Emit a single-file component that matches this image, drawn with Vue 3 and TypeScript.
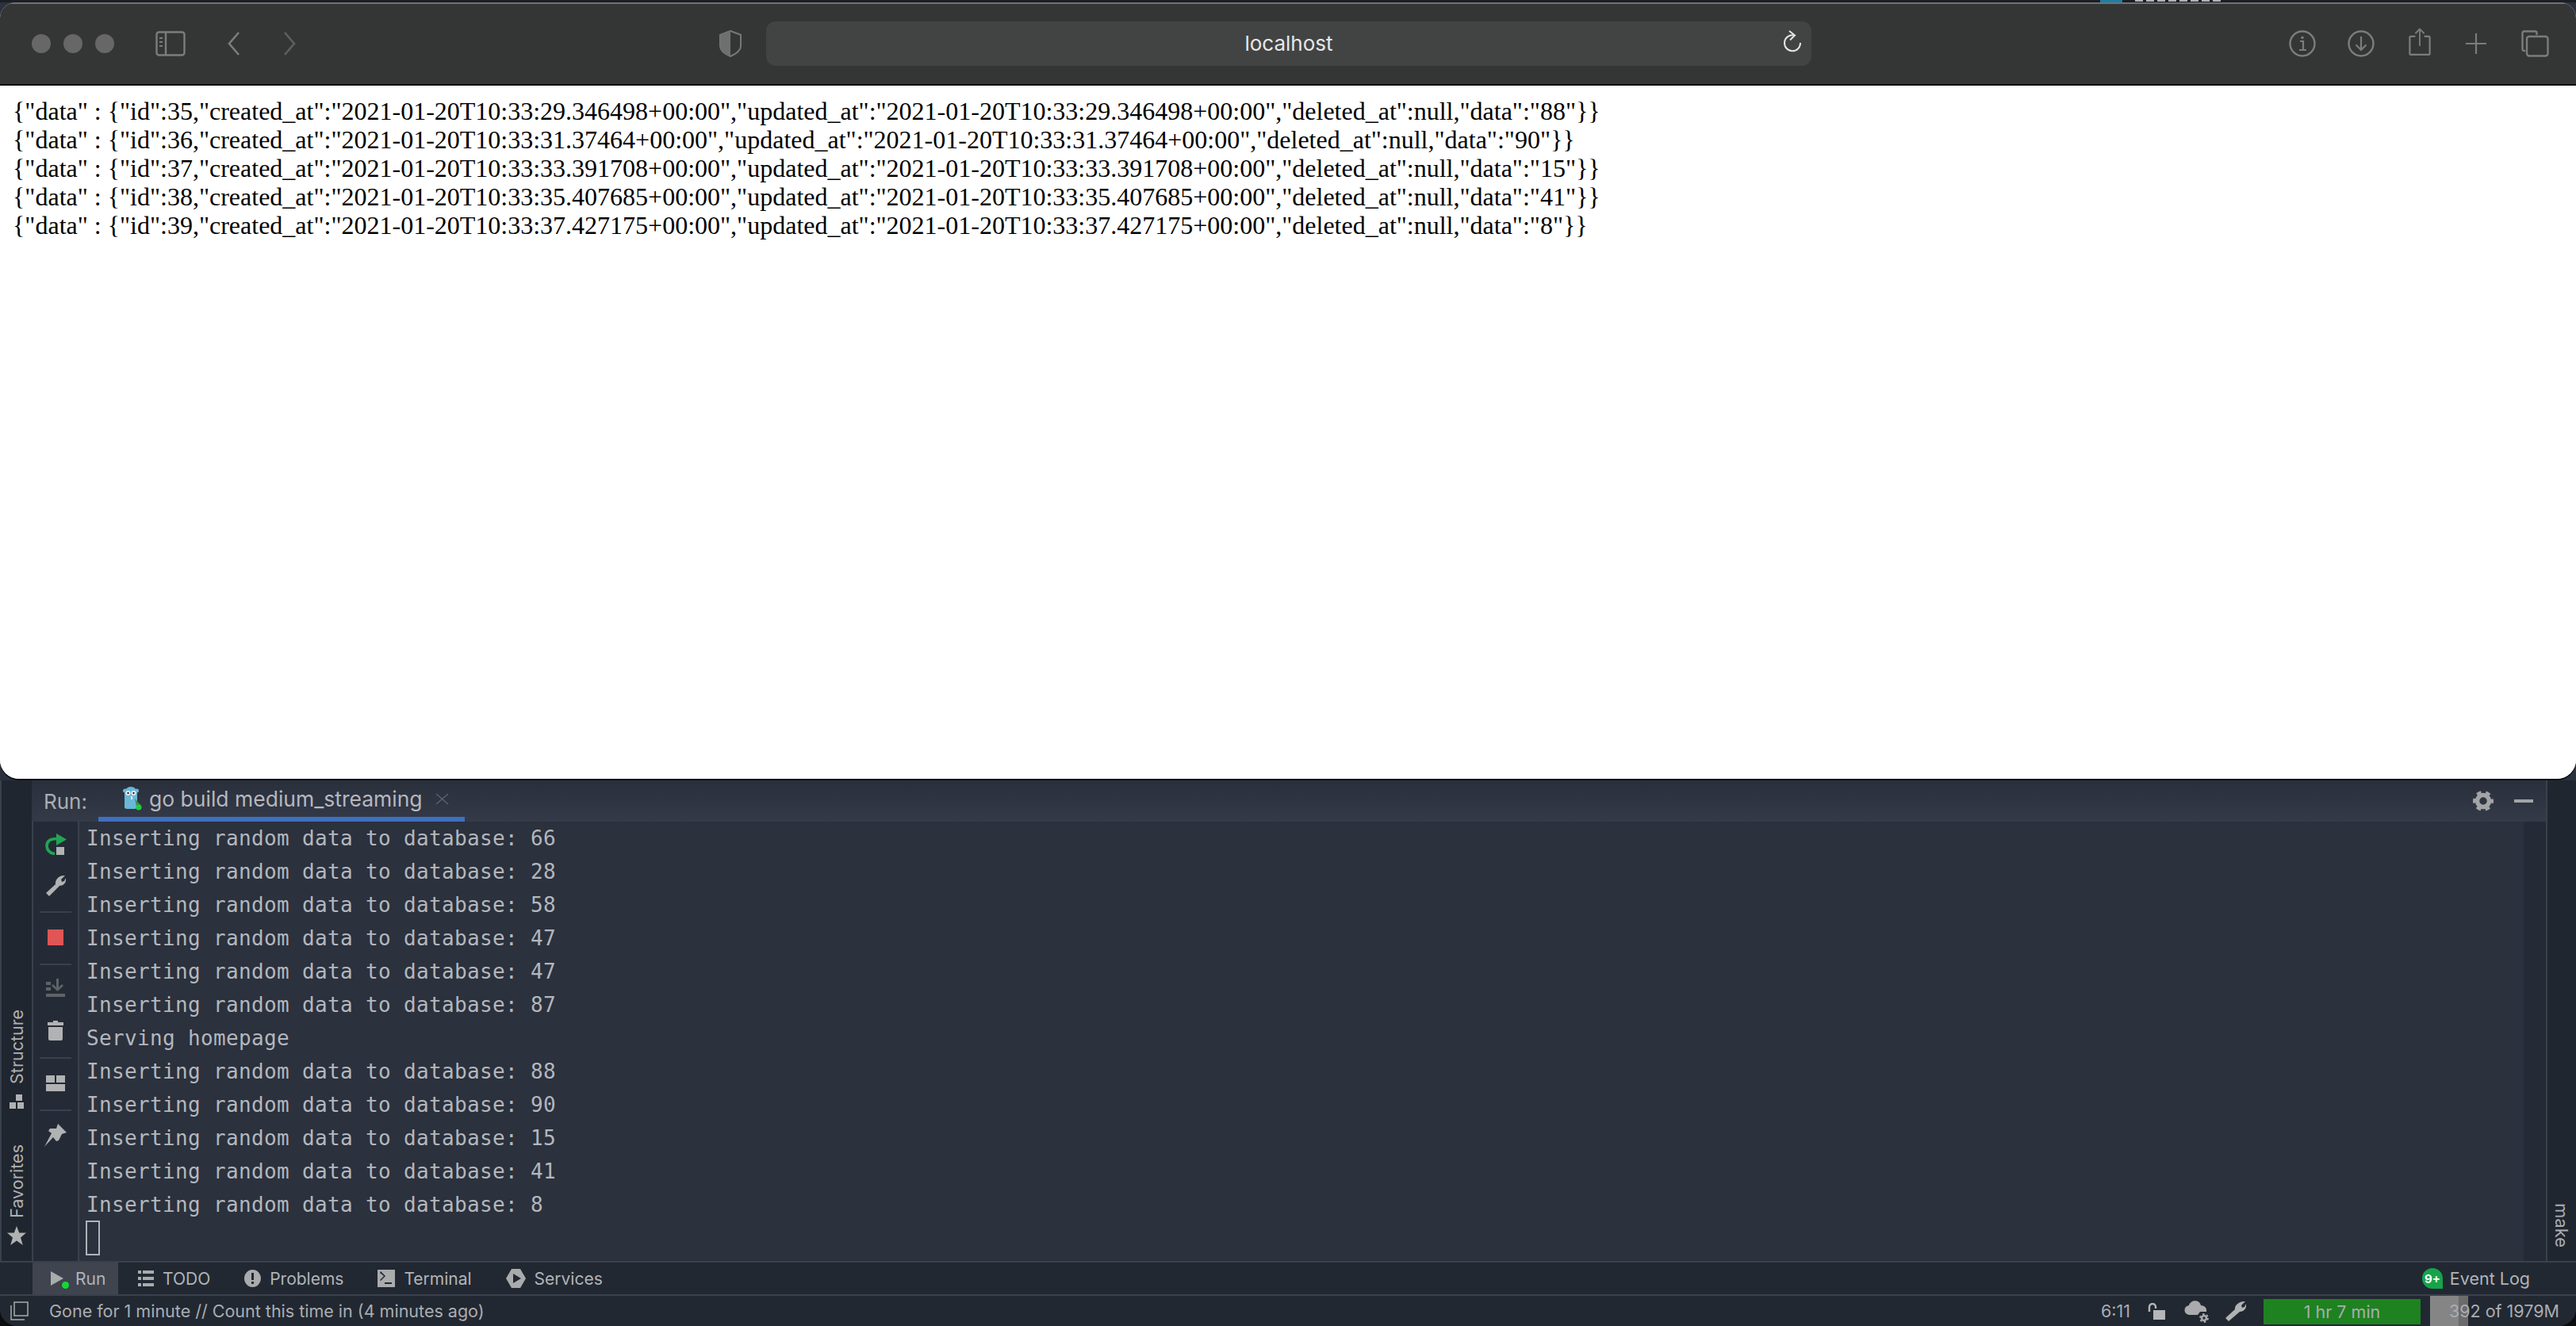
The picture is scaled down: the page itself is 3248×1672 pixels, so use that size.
<script setup lang="ts">
interface Row { id: number; c: string; d: string }
const rows: Row[] = [
  { id: 35, c: '2021-01-20T10:33:29.346498+00:00', d: '88' },
  { id: 36, c: '2021-01-20T10:33:31.37464+00:00', d: '90' },
  { id: 37, c: '2021-01-20T10:33:33.391708+00:00', d: '15' },
  { id: 38, c: '2021-01-20T10:33:35.407685+00:00', d: '41' },
  { id: 39, c: '2021-01-20T10:33:37.427175+00:00', d: '8' },
]
const lines = rows.map(r => `{"data" : {"id":${r.id},"created_at":"${r.c}","updated_at":"${r.c}","deleted_at":null,"data":"${r.d}"}}`)
const log = [66, 28, 58, 47, 47, 87, null, 88, 90, 15, 41, 8].map(n =>
  n === null ? 'Serving homepage' : `Inserting random data to database: ${n}`)
</script>

<template>
  <div class="screen">
    <div class="sliver"><i class="sliver-tab"></i><i class="sliver-text"></i></div>
    <div class="browser">
      <header class="toolbar">
        <div class="dots"><i></i><i></i><i></i></div>
        <svg class="ic sidebar" viewBox="0 0 38 32"><rect x="1.500" y="1.500" width="35" height="29" rx="3" fill="none" stroke="#7c7c7c" stroke-width="2.400"/><path d="M13 2v28" stroke="#7c7c7c" stroke-width="2.400"/><path d="M5 9h4M5 14h4M5 19h4" stroke="#7c7c7c" stroke-width="2"/></svg>
        <svg class="ic chev-l" viewBox="0 0 18 32"><path d="M15 2 3 16l12 14" fill="none" stroke="#7c7c7c" stroke-width="2.600"/></svg>
        <svg class="ic chev-r" viewBox="0 0 18 32"><path d="M3 2l12 14L3 30" fill="none" stroke="#5f5f5f" stroke-width="2.600"/></svg>
        <svg class="ic shield" viewBox="0 0 28 34"><path d="M14 1 27 6v14c0 5-6 10-13 13C7 30 1 25 1 20V6z" fill="none" stroke="#777" stroke-width="2"/><path d="M14 1 1 6v14c0 5 6 10 13 13z" fill="#6f6f6f"/></svg>
        <div class="address">
          <span class="host">localhost</span>
          <svg class="reload" viewBox="0 0 24 34"><path d="M14 6.500A10 10 0 1 0 22 16" fill="none" stroke="#e4e4e4" stroke-width="2"/><path d="M8 1l7 5.500-6 6" fill="none" stroke="#e4e4e4" stroke-width="2"/></svg>
        </div>
        <div class="tools">
          <svg class="ic" viewBox="0 0 34 34"><circle cx="17" cy="17" r="15.500" fill="none" stroke="#7c7c7c" stroke-width="2.400"/><path d="M14 14h4v11M13 25h9" fill="none" stroke="#7c7c7c" stroke-width="2.200"/><circle cx="17" cy="9.500" r="1.800" fill="#7c7c7c"/></svg>
          <svg class="ic" viewBox="0 0 34 34"><circle cx="17" cy="17" r="15.500" fill="none" stroke="#7c7c7c" stroke-width="2.400"/><path d="M17 8v17M10.500 18.500 17 25l6.500-6.500" fill="none" stroke="#7c7c7c" stroke-width="2.200"/></svg>
          <svg class="ic share" viewBox="0 0 30 38"><path d="M9 12H3a1.500 1.500 0 0 0-1.500 1.500V35A1.500 1.500 0 0 0 3 36.500h24a1.500 1.500 0 0 0 1.500-1.500V13.500A1.500 1.500 0 0 0 27 12h-6" fill="none" stroke="#7c7c7c" stroke-width="2.400"/><path d="M15 25V2M9 8l6-6 6 6" fill="none" stroke="#7c7c7c" stroke-width="2"/></svg>
          <svg class="ic plus" viewBox="0 0 28 28"><path d="M14 1v26M1 14h26" stroke="#7c7c7c" stroke-width="2.200"/></svg>
          <svg class="ic tabs" viewBox="0 0 35 34"><path d="M5 26H3.500A2 2 0 0 1 1.500 24V3.500A2 2 0 0 1 3.500 1.500h14a2 2 0 0 1 2 2V6" fill="none" stroke="#7c7c7c" stroke-width="2.400"/><rect x="7" y="8" width="26.500" height="24.500" rx="3" fill="none" stroke="#7c7c7c" stroke-width="2.400"/></svg>
        </div>
      </header>
      <main class="page">
        <div v-for="l in lines" :key="l">{{ l }}</div>
      </main>
    </div>

    <div class="ide">
      <aside class="stripe">
        <div class="vtab fav-tab"><svg viewBox="0 0 24 24" class="vic star"><path d="M12 0l3.200 8.500H24l-7 6 2.800 9.500L12 18.500 4.200 24 7 14.500l-7-6h8.800z" fill="#afb1b3"/></svg><span>Favorites</span></div>
        <div class="vtab str-tab"><svg viewBox="0 0 18 18" class="vic"><path d="M0 10h8v8H0zM10 10h8v8h-8zM8 0h8v8H8z" fill="#afb1b3"/></svg><span>Structure</span></div>
      </aside>
      <section class="run">
        <div class="run-head">
          <span class="run-label">Run:</span>
          <div class="run-tab">
            <svg class="gopher" viewBox="0 0 26 30"><circle cx="3.500" cy="5" r="2.500" fill="#6ab7d8"/><circle cx="18.500" cy="5" r="2.500" fill="#6ab7d8"/><path d="M3 8C3 3 7 0 11 0s8 3 8 8v18c0 2-3 2-8 2s-8 0-8-2z" fill="#6ab7d8"/><circle cx="7.500" cy="8" r="3" fill="#eee"/><circle cx="14.500" cy="8" r="3" fill="#eee"/><circle cx="7.500" cy="8" r="1.200" fill="#223"/><circle cx="14.500" cy="8" r="1.200" fill="#223"/><path d="M11 12h2v4h-2z" fill="#eee"/><path d="M16 15l8 9-5 6z" fill="#3f8f45"/><circle cx="21" cy="26" r="3.500" fill="#19d13a"/></svg>
            <span class="run-name">go build medium_streaming</span>
            <svg class="close" viewBox="0 0 17 15"><path d="M1 1l15 13M16 1 1 14" stroke="#5d636c" stroke-width="1.400"/></svg>
          </div>
          <div class="spacer"></div>
          <svg class="gear" viewBox="0 0 26 26"><circle cx="13" cy="13" r="7.500" fill="none" stroke="#a3a4a6" stroke-width="5.500"/><circle cx="13" cy="13" r="11" fill="none" stroke="#a3a4a6" stroke-width="4" stroke-dasharray="5.760 5.760" stroke-dashoffset="2.880"/></svg>
          <i class="minimize"></i>
        </div>
        <div class="run-body">
          <div class="actions">
            <svg class="act a1" viewBox="0 0 27 27"><path d="M12 25.500C5 25 2 20 2 15.500 2 10 6 6.500 15 6.500" fill="none" stroke="#23a455" stroke-width="3.600"/><path d="M14 0l13 7.500L14 15z" fill="#23a455"/><rect x="14" y="17" width="10" height="10" fill="#b0b2b4"/></svg>
            <svg class="act a2" viewBox="0 0 26 27"><path d="M25 1l-5 5 1 3 3-1 2-4c1 6-3 10-8 10L5 27l-4-4 12-11C12 6 18 0 25 1z" fill="#b0b2b4"/></svg>
            <i class="sep s1"></i>
            <i class="stop"></i>
            <i class="sep s2"></i>
            <svg class="act a4" viewBox="0 0 24 24"><path d="M13 0h3v11l4-4 2 2-7.500 7L7 9l2-2 4 4zM0 4h6v4H0zM0 11h6v4H0zM0 19h24v4H0z" fill="#5f6366"/></svg>
            <svg class="act a5" viewBox="0 0 20 25"><path d="M7 0h6v2h7v4H0V2h7zM1 8h18v15a2 2 0 0 1-2 2H3a2 2 0 0 1-2-2z" fill="#b0b2b4"/></svg>
            <i class="sep s3"></i>
            <svg class="act a6" viewBox="0 0 24 20"><path d="M0 0h11v9H0zM13 0h11v9H13zM0 11h24v9H0z" fill="#b0b2b4"/></svg>
            <i class="sep s4"></i>
            <svg class="act a7" viewBox="0 0 28 29"><path d="M17 0l11 11-6 2-4 8-3 1-4-5L0 29l9-17-4-3 2-3 8 0z" fill="#b0b2b4"/></svg>
          </div>
          <pre class="console"><div v-for="(l, i) in log" :key="i" class="ln">{{ l }}</div><i class="caret"></i></pre>
          <div class="gutter"></div>
        </div>
      </section>
      <aside class="right-stripe"><span>make</span></aside>
    </div>

    <nav class="tabbar">
      <div class="tb active"><svg viewBox="0 0 16 18" class="tbi play"><path d="M0 0l16 9L0 18z" fill="#a9abad"/></svg><i class="dot-run"></i><span>Run</span></div>
      <div class="tb"><svg viewBox="0 0 20 22" class="tbi todo"><path d="M0 1h4v4H0zM6 1h14v4H6zM0 9h4v4H0zM6 9h14v4H6zM0 17h4v4H0zM6 17h14v4H6z" fill="#a9abad"/></svg><span>TODO</span></div>
      <div class="tb"><svg viewBox="0 0 21 22" class="tbi prob"><path fill-rule="evenodd" d="M10.500 0a10.500 11 0 1 1 0 22 10.500 11 0 0 1 0-22zM9 4v9h3V4zM9 15v3h3v-3z" fill="#a9abad"/></svg><span>Problems</span></div>
      <div class="tb"><svg viewBox="0 0 22 22" class="tbi term"><path fill-rule="evenodd" d="M0 0h22v22H0zM3 4l5 4-5 5 1 1 6-6-6-6zM9 16v2h9v-2z" fill="#a9abad"/></svg><span>Terminal</span></div>
      <div class="tb"><svg viewBox="0 0 25 24" class="tbi serv"><path fill-rule="evenodd" d="M7 0h11l7 12-7 12H7L0 12zM9 6v12l10-6z" fill="#a9abad"/></svg><span>Services</span></div>
      <div class="spacer"></div>
      <div class="event"><b>9+</b><span>Event Log</span></div>
    </nav>

    <footer class="status">
      <svg class="st-square" viewBox="0 0 24 24"><path d="M6 1h17v17H6z" fill="none" stroke="#a9abad" stroke-width="1.500"/><path d="M2 5v18h17" fill="none" stroke="#a9abad" stroke-width="1.500"/></svg>
      <span class="msg">Gone for 1 minute // Count this time in (4 minutes ago)</span>
      <div class="spacer"></div>
      <span class="pos">6:11</span>
      <svg class="lock" viewBox="0 0 22 21"><path d="M2 11V5a4 4 0 0 1 8 0v2" fill="none" stroke="#b4b6b8" stroke-width="2.400"/><rect x="7" y="9" width="15" height="12" fill="#b4b6b8"/></svg>
      <svg class="cloud" viewBox="0 0 32 30"><path d="M7 20a6 6 0 0 1-1-12C8 1 19 0 21 8c5 0 8 4 7 8h-8l-3 4z" fill="#a9abad"/><circle cx="25" cy="24" r="3" fill="none" stroke="#a9abad" stroke-width="2.600"/><circle cx="25" cy="24" r="5" fill="none" stroke="#a9abad" stroke-width="1.800" stroke-dasharray="2.600 2.640"/></svg>
      <svg class="wrench" viewBox="0 0 27 26"><path d="M26 1l-5 5 1 3 3-1 2-4c1 6-3 10-8 10L5 26l-4-4 12-11C12 6 19 0 26 1z" fill="#b0b2b4"/></svg>
      <div class="timer">1 hr 7 min</div>
      <div class="memory"><i class="m1"></i><i class="m2"></i><span>392 of 1979M</span></div>
    </footer>
  </div>
</template>

<style scoped>
.screen { width: 3248px; height: 1672px; background: #2b313d; display: flex; flex-direction: column; overflow: hidden; position: relative; font-family: Inter, "Liberation Sans", sans-serif; border-radius: 0 0 22px 22px; }
.sliver { height: 3px; flex: none; background: #1b1e24; position: relative; overflow: hidden; }
.sliver-tab { position: absolute; left: 2648px; top: 0; width: 28px; height: 3px; background: #1b7fa6; }
.sliver-text { position: absolute; left: 2692px; top: 0; width: 108px; height: 2px; background: repeating-linear-gradient(90deg, #aeb2b8 0 10px, transparent 10px 14px); }
.browser { height: 979px; flex: none; display: flex; flex-direction: column; border-radius: 20px 20px 24px 24px; overflow: hidden; background: #fff; box-shadow: 0 2px 0 #0c0d0f; }
.toolbar { height: 105px; box-sizing: border-box; flex: none; background: #343635; border-top: 2px solid #727272; border-bottom: 2px solid #0f0f0f; display: flex; align-items: center; padding-left: 40px; padding-bottom: 2px; }
.dots { display: flex; gap: 16px; }
.dots i { width: 24px; height: 24px; border-radius: 50%; background: #666766; display: block; }
.ic { display: block; flex: none; }
.sidebar { width: 38px; height: 32px; margin-left: 52px; }
.chev-l { width: 18px; height: 32px; margin-left: 52px; }
.chev-r { width: 18px; height: 32px; margin-left: 52px; }
.shield { width: 28px; height: 34px; margin-left: 533px; }
.address { width: 1318px; height: 56px; margin-left: 31px; border-radius: 12px; background: #424443; position: relative; display: flex; align-items: center; justify-content: center; flex: none; }
.host { color: #e7e7e7; font-size: 26px; }
.reload { position: absolute; right: 12px; top: 11px; width: 24px; height: 34px; }
.tools { display: flex; align-items: center; margin-left: 602px; gap: 43px; }
.tools .ic { width: 34px; height: 34px; }
.tools .ic:first-child { margin-right: -3px; }
.tools .share { width: 28px; height: 37px; margin-top: -4px; }
.tools .plus { width: 28px; height: 28px; }
.tools .tabs { width: 35px; }
.page { flex: 1; background: #fff; color: #000; font-family: "Liberation Serif", serif; font-size: 32px; line-height: 36px; padding: 14px 16px; white-space: nowrap; }
.ide { height: 606px; flex: none; margin-top: 2px; display: flex; background: #20262f; }
.stripe { width: 40px; flex: none; background: #20262f; position: relative; border-left: 2px solid #3a414d; box-sizing: border-box; }
.vtab { position: absolute; left: 0; width: 38px; display: flex; flex-direction: column-reverse; align-items: center; gap: 13px; color: #afb1b3; font-size: 21.500px; }
.vtab span { writing-mode: vertical-rl; transform: rotate(180deg); }
.vic { width: 18px; height: 18px; flex: none; }
.vic.star { width: 24px; height: 24px; }
.fav-tab { top: 459px; gap: 10px; }
.str-tab { top: 289px; }
.run { flex: 1; min-width: 0; display: flex; flex-direction: column; }
.run-head { height: 52px; flex: none; display: flex; align-items: center; background: linear-gradient(#292f3b, #343a47); color: #a9adb3; font-size: 26.500px; padding-right: 16px; box-sizing: border-box; }
.run-label { margin-left: 15px; width: 69px; font-size: 26px; }
.run-tab { height: 52px; box-sizing: border-box; width: 462px; border-bottom: 6px solid #3f6fc1; display: flex; align-items: center; padding-left: 30px; color: #b5b8bf; flex: none; }
.run-name { white-space: nowrap; margin-left: 8px; }
.gopher { width: 26px; height: 30px; flex: none; }
.close { width: 17px; height: 15px; margin-left: 16px; flex: none; }
.spacer { flex: 1; }
.gear { width: 26px; height: 26px; margin-right: 26px; flex: none; }
.minimize { width: 24px; height: 4px; background: #a3a4a6; display: block; flex: none; }
.run-body { flex: 1; display: flex; min-height: 0; background: #2b313d; }
.actions { width: 60px; flex: none; background: #252b36; border-left: 2px solid #3a414d; border-right: 2px solid #3a414d; box-sizing: border-box; height: 100%; display: flex; flex-direction: column; align-items: center; padding-top: 15px; }
.act { flex: none; display: block; }
.a1 { width: 27px; height: 27px; }
.a2 { width: 26px; height: 27px; margin-top: 25px; }
.sep { width: 40px; height: 2px; background: #3a414d; display: block; flex: none; }
.s1 { margin-top: 19px; }
.stop { width: 20px; height: 20px; background: #e05555; margin-top: 21px; display: block; flex: none; }
.s2 { margin-top: 23px; }
.a4 { width: 24px; height: 24px; margin-top: 17px; }
.a5 { width: 20px; height: 25px; margin-top: 29px; }
.s3 { margin-top: 21px; }
.a6 { width: 24px; height: 20px; margin-top: 21px; }
.s4 { margin-top: 23px; }
.a7 { width: 28px; height: 29px; margin-top: 16px; }
.console { flex: 1; margin: 0; padding: 0 0 0 9px; color: #b3b7bd; font-family: "DejaVu Sans Mono", monospace; font-size: 26px; line-height: 42px; letter-spacing: 0.35px; min-width: 0; }
.ln { height: 42px; }
.caret { display: block; width: 18px; height: 44px; border: 2px solid #b0b3b8; box-sizing: border-box; margin: -1px 0 0 -1px; }
.gutter { width: 28px; flex: none; background: #252b36; }
.right-stripe { width: 38px; flex: none; background: #20262f; border-left: 2px solid #3a414d; box-sizing: border-box; display: flex; justify-content: center; align-items: flex-end; padding-bottom: 17px; color: #a9adb3; font-size: 22px; }
.right-stripe span { writing-mode: vertical-rl; }
.tabbar { height: 42px; flex: none; border-top: 2px solid #3a414d; box-sizing: border-box; background: #222831; display: flex; align-items: stretch; padding-left: 41px; padding-right: 58px; color: #a9adb3; font-size: 21px; }
.tb { display: flex; align-items: center; gap: 11px; padding: 0 18px 0 25px; position: relative; color: #b0b4ba; }
.tb.active { background: #3f444f; width: 108px; box-sizing: border-box; flex: none; padding: 0 0 0 23px; gap: 15px; }
.tbi { flex: none; display: block; }
.play { width: 16px; height: 18px; }
.todo { width: 20px; height: 22px; }
.prob { width: 21px; height: 22px; }
.term { width: 22px; height: 22px; }
.serv { width: 25px; height: 24px; }
.dot-run { position: absolute; left: 37px; top: 24px; width: 9px; height: 9px; border-radius: 50%; background: #17d634; }
.event { display: flex; align-items: center; gap: 9px; color: #b0b4ba; font-size: 21.500px; }
.event b { width: 26px; height: 26px; border-radius: 50% 50% 0 50%; background: #16a34a; color: #fff; font-size: 15px; font-weight: 700; display: flex; align-items: center; justify-content: center; }
.status { height: 40px; flex: none; border-top: 2px solid #3a414d; box-sizing: border-box; background: #222831; display: flex; align-items: center; color: #a9adb3; font-size: 21.500px; padding-left: 12px; }
.st-square { width: 24px; height: 24px; flex: none; }
.msg { margin-left: 26px; }
.lock { width: 22px; height: 21px; margin-left: 22px; flex: none; }
.cloud { width: 32px; height: 30px; margin-left: 24px; flex: none; }
.wrench { width: 27px; height: 26px; margin-left: 19px; flex: none; }
.timer { width: 198px; height: 32px; margin-left: 22px; background: #1e8220; color: #a9adb3; display: flex; align-items: center; justify-content: center; flex: none; align-self: flex-end; margin-bottom: 2px; }
.memory { width: 163px; height: 38px; margin-left: 12px; margin-right: 21px; position: relative; display: flex; align-items: center; justify-content: flex-end; flex: none; }
.memory span { position: relative; color: #a9adb3; white-space: nowrap; }
.m1 { position: absolute; left: 0; top: 0; bottom: 0; width: 36px; background: #858585; }
.m2 { position: absolute; left: 36px; top: 0; bottom: 0; width: 12px; background: #6b6b6b; }
</style>

<style>
html, body { margin: 0; background: #0c0d0f; }
</style>
